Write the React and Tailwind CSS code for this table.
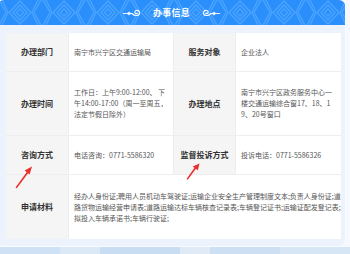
import React from "react";

function Ornament({ flip }) {
  return (
    <svg width="18" height="10" viewBox="0 0 18 10" className={flip ? "scale-x-[-1]" : ""}>
      <path d="M0 5.5 H9" stroke="#fff" strokeWidth="0.9" fill="none" />
      <circle cx="6" cy="5.5" r="1.3" fill="none" stroke="#fff" strokeWidth="0.9" />
      <path d="M9 5.5 C12 8.5 16.5 8 16.5 5 C16.5 2 13 1.5 12 3.5 C11.3 5 13 6.3 14.2 5.2" stroke="#fff" strokeWidth="1.1" fill="none" strokeLinecap="round" />
    </svg>
  );
}

function Header() {
  return (
    <div className="relative h-[25px] bg-[#2b8ffb] flex items-center justify-center gap-[12px] shrink-0">
      <svg className="absolute inset-0" width="347" height="25">
        <defs>
          <pattern id="zz" width="44" height="25" patternUnits="userSpaceOnUse">
            <g fill="none" stroke="#4aa4ff" strokeWidth="1.3">
              <path d="M22 1 L33 12.5 L22 24 L11 12.5 Z" />
              <path d="M22 5 L29 12.5 L22 20 L15 12.5 Z" />
              <path d="M22 9 L25.5 12.5 L22 16 L18.5 12.5 Z" />
              <path d="M0 -2 L8 12.5 L0 27" />
              <path d="M3 -2 L10 12.5 L3 27" />
              <path d="M44 -2 L36 12.5 L44 27" />
              <path d="M41 -2 L34 12.5 L41 27" />
            </g>
          </pattern>
        </defs>
        <rect width="347" height="25" fill="url(#zz)" />
      </svg>
      <div className="relative"><Ornament /></div>
      <span className="relative text-white font-bold text-[9px] leading-none tracking-[0.2px]">办事信息</span>
      <div className="relative"><Ornament flip /></div>
    </div>
  );
}

function Label({ children, className = "" }) {
  return (
    <div className={"bg-[#f5f5f5] flex items-center justify-center text-[8px] font-semibold text-[#333] " + className}>
      {children}
    </div>
  );
}

function Value({ children, className = "" }) {
  return (
    <div className={"bg-white flex items-center px-[5px] text-[7px] leading-[11px] text-[#555] whitespace-nowrap overflow-hidden " + className}>
      <div>{children}</div>
    </div>
  );
}

export default function App() {
  return (
    <div className="relative w-[350px] h-[254px] overflow-hidden bg-[#f5f8fc] font-['Noto_Sans_CJK_SC','Noto_Sans',sans-serif]">
      <div className="-ml-[2px] w-[347px] h-[246px] rounded-[6px] bg-[#edf3fd] overflow-hidden flex flex-col shadow-[0_0_0_1px_#f8fbff]">
        <Header />
        <div className="pt-[8px] pl-[8px] pr-[4px] pb-[7px]">
          <div className="grid grid-cols-[62px_104px_61px_105px] grid-rows-[38px_63px_38px_64px] gap-[1px] bg-[#eceef2]">
            <Label>办理部门</Label>
            <Value>南宁市兴宁区交通运输局</Value>
            <Label>服务对象</Label>
            <Value>企业法人</Value>

            <Label>办理时间</Label>
            <Value>
              工作日：上午9:00-12:00、 下<br />
              午14:00-17:00（周一至周五，<br />
              法定节假日除外）
            </Value>
            <Label>办理地点</Label>
            <Value>
              南宁市兴宁区政务服务中心一<br />
              楼交通运输综合窗17、18、1<br />
              9、20号窗口
            </Value>

            <Label>咨询方式</Label>
            <Value>电话咨询：0771-5586320</Value>
            <Label>监督投诉方式</Label>
            <Value>投诉电话：0771-5586326</Value>

            <Label>申请材料</Label>
            <Value className="col-span-3">
              经办人身份证;聘用人员机动车驾驶证;运输企业安全生产管理制度文本;负责人身份证;道<br />
              路货物运输经营申请表;道路运输达标车辆核查记录表;车辆登记证书;运输证配发登记表;<br />
              拟投入车辆承诺书;车辆行驶证;
            </Value>
          </div>
        </div>
      </div>
      <div className="mt-[1px] h-[7px] flex">
        <div className="w-[60px] bg-[#cfe1f4]" />
        <div className="w-[40px] bg-[#dbe8f6]" />
        <div className="w-[80px] bg-[#c9ddf2]" />
        <div className="w-[30px] bg-[#dfeaf6]" />
        <div className="w-[70px] bg-[#cde0f3]" />
        <div className="flex-1 bg-[#d7e6f5]" />
      </div>
      <svg className="absolute inset-0 pointer-events-none" width="350" height="254">
        <g fill="#e8302c">
          <polygon points="15.5,187.5 16.8,188.3 28.6,172.6 27.2,171.6" />
          <polygon points="32,166.5 24.6,170.6 29.6,174.4" />
          <polygon points="186.5,179 187.8,179.8 196.4,167.9 195,167" />
          <polygon points="199.5,163.5 192.7,166.5 197.8,170.2" />
        </g>
      </svg>
    </div>
  );
}
